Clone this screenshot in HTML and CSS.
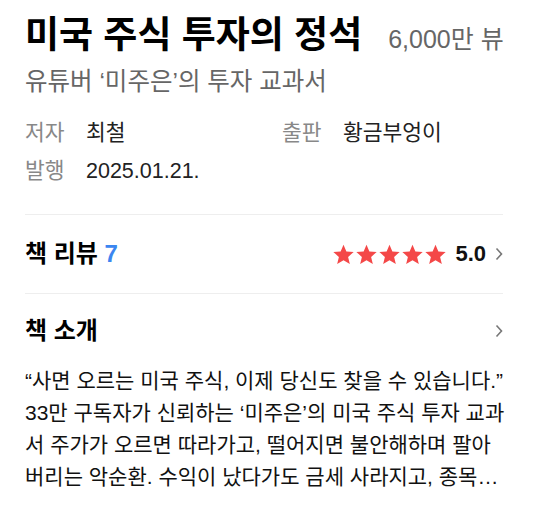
FILE: index.html
```html
<!DOCTYPE html>
<html lang="ko">
<head>
  <meta charset="UTF-8" />
  <meta name="viewport" content="width=device-width, initial-scale=1.0"/>
  <title>미국 주식 투자의 정석</title>
  <link rel="stylesheet" href="styles.css">
</head>
<body>
  <div class="book">
    <div class="head">
      <h1 class="title">미국 주식 투자의 정석<span class="views">6,000만 뷰</span></h1>
      <p class="subtitle">유튜버 ‘미주은’의 투자 교과서</p>
    </div>

    <div class="info">
      <div class="info-item"><span class="label">저자</span><span class="value">최철</span></div>
      <div class="info-item"><span class="label">출판</span><span class="value">황금부엉이</span></div>
      <div class="info-item"><span class="label">발행</span><span class="value">2025.01.21.</span></div>
    </div>

    <a class="section review" href="#">
      <h2>책 리뷰 <span class="count">7</span></h2>
      <div class="rating">
        <span class="stars">
          <svg viewBox="0 0 24 24"><path d="M12 1.8l3 7.1 7.6.6-5.8 5 1.8 7.5L12 18l-6.6 4 1.8-7.5-5.8-5 7.6-.6z"/></svg>
          <svg viewBox="0 0 24 24"><path d="M12 1.8l3 7.1 7.6.6-5.8 5 1.8 7.5L12 18l-6.6 4 1.8-7.5-5.8-5 7.6-.6z"/></svg>
          <svg viewBox="0 0 24 24"><path d="M12 1.8l3 7.1 7.6.6-5.8 5 1.8 7.5L12 18l-6.6 4 1.8-7.5-5.8-5 7.6-.6z"/></svg>
          <svg viewBox="0 0 24 24"><path d="M12 1.8l3 7.1 7.6.6-5.8 5 1.8 7.5L12 18l-6.6 4 1.8-7.5-5.8-5 7.6-.6z"/></svg>
          <svg viewBox="0 0 24 24"><path d="M12 1.8l3 7.1 7.6.6-5.8 5 1.8 7.5L12 18l-6.6 4 1.8-7.5-5.8-5 7.6-.6z"/></svg>
        </span>
        <span class="score">5.0</span>
        <svg class="chevron" viewBox="0 0 8 14"><path d="M1.5 1.5l5 5.5-5 5.5"/></svg>
      </div>
    </a>

    <div class="section intro">
      <a class="intro-head" href="#">
        <h2>책 소개</h2>
        <svg class="chevron" viewBox="0 0 8 14"><path d="M1.5 1.5l5 5.5-5 5.5"/></svg>
      </a>
      <p class="desc">“사면 오르는 미국 주식, 이제 당신도 찾을 수 있습니다.” 33만 구독자가 신뢰하는 ‘미주은’의 미국 주식 투자 교과서 주가가 오르면 따라가고, 떨어지면 불안해하며 팔아버리는 악순환. 수익이 났다가도 금세 사라지고, 종목을 고르는 기준도 없이 남의 말만 듣고 투자하고 있지는 않나요? 이 책은 미국 주식 투자의 기본부터 실전까지 담았습니다.</p>
    </div>
  </div>
</body>
</html>
```

FILE: styles.css
```css
body {
  margin: 0;
  background: #fff;
  font-family: "Liberation Sans", "Noto Sans CJK KR", sans-serif;
  color: #111;
}

.book {
  padding: 12px 42px 0 25px;
}

a {
  color: inherit;
  text-decoration: none;
}

.title {
  margin: 0;
  font-size: 37px;
  font-weight: bold;
  line-height: 48px;
  color: #000;
  white-space: nowrap;
}

.views {
  margin-left: 26px;
  font-size: 25px;
  font-weight: normal;
  color: #666;
}

.subtitle {
  margin: 0;
  font-size: 24.5px;
  line-height: 38px;
  color: #666;
}

.info {
  display: grid;
  grid-template-columns: 257px 1fr;
  row-gap: 6px;
  padding: 16px 0 27px;
  border-bottom: 1px solid #eee;
}

.info-item {
  display: flex;
  font-size: 21.5px;
  line-height: 32px;
}

.label {
  width: 61px;
  color: #888;
}

.value {
  color: #222;
}

.section h2 {
  margin: 0;
  font-size: 24px;
  line-height: 32px;
  font-weight: bold;
  color: #000;
}

.review {
  display: flex;
  justify-content: space-between;
  align-items: center;
  height: 78px;
  border-bottom: 1px solid #eee;
}

.count {
  color: #3b86f0;
}

.rating {
  display: flex;
  align-items: center;
}

.stars {
  display: flex;
}

.stars svg {
  width: 23px;
  height: 23px;
  fill: #f44848;
}

.score {
  margin-left: 8px;
  font-size: 22px;
  font-weight: bold;
  color: #111;
}

.chevron {
  width: 8px;
  height: 14px;
  margin-left: 9px;
  fill: none;
  stroke: #777;
  stroke-width: 1.6;
}

.intro-head {
  display: flex;
  justify-content: space-between;
  align-items: center;
  padding: 21px 0 18px;
}

.desc {
  margin: 0 -4px 0 0;
  font-size: 21px;
  line-height: 32px;
  color: #111;
  word-break: break-all;
  display: -webkit-box;
  -webkit-line-clamp: 4;
  -webkit-box-orient: vertical;
  overflow: hidden;
}
```
